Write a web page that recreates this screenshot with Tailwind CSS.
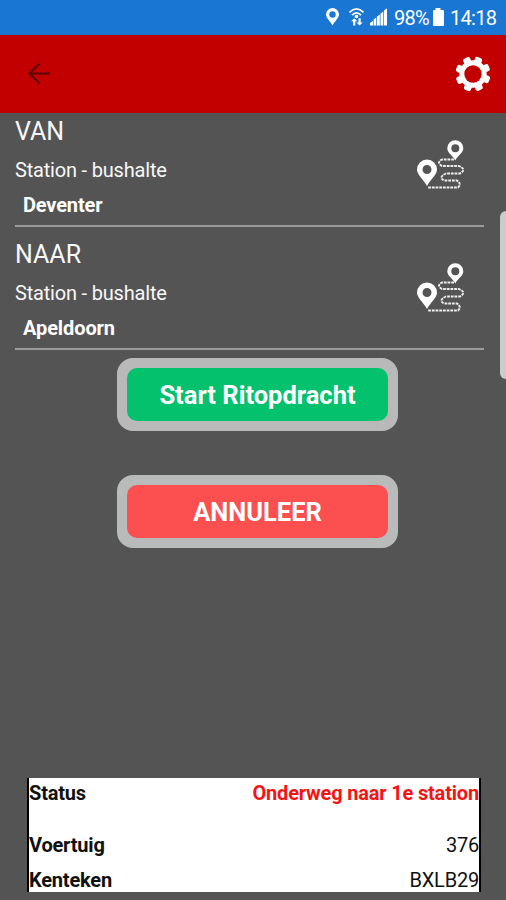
<!DOCTYPE html>
<html lang="nl">
<head>
<meta charset="utf-8">
<title>Ritopdracht</title>
<script src="https://cdn.jsdelivr.net/npm/@tailwindcss/browser@4"></script>
</head>
<body class="relative flex h-[900px] w-[506px] flex-col overflow-hidden bg-[#545454] font-['Roboto',sans-serif] text-[#f8f8f8]">
<svg class="hidden">
  <symbol id="route" viewBox="0 0 54 54">
    <path fill="#fff" fill-rule="evenodd" d="M15 50C12 44 5 39 5 33.500a10 10 0 0 1 20 0C25 39 18 44 15 50zM15 29a4.500 4.500 0 1 0 0 9a4.500 4.500 0 1 0 0-9z"/>
    <path fill="#fff" fill-rule="evenodd" d="M43.300 24.500C41 19.500 35.300 17 35.300 12.200a8 8 0 0 1 16 0C51.300 17 45.500 19.500 43.300 24.500zM43.300 8.200a4 4 0 1 0 0 8a4 4 0 1 0 0-8z"/>
    <path fill="none" stroke="#eee" stroke-width="1.900" stroke-dasharray="2.800 0.900" d="M42 23.500H30Q24 26.500 30 30H47Q55 33.500 48 37.500H34Q26 41 32 44.500H45Q50 48 46 51.500H16"/>
  </symbol>
</svg>
<header class="flex h-[35px] shrink-0 items-center bg-[#1976d2] pl-[326px]">
  <svg class="h-[35px] w-[64px]" viewBox="0 0 64 35" fill="#fff">
    <path fill-rule="evenodd" d="M6.500 25.500C5 22 0 18 0 14.500a6.500 6.500 0 0 1 13 0C13 18 8 22 6.500 25.500zM6.500 11.300a3.200 3.200 0 1 0 0 6.400a3.200 3.200 0 1 0 0-6.400z"/>
    <g fill="none" stroke="#fff" stroke-width="1.800"><path d="M23.500 12.300Q30.500 5.500 37.500 12.300M26 15.200Q30.500 10.500 35 15.200"/></g>
    <circle cx="30.500" cy="16.500" r="1.800"/>
    <path d="M28.300 18.300l3 3h-2v4.200h-2.200v-4.200h-2zM33.500 25.500l-3-3h2v-4.200h2.200v4.200h2z"/>
    <path d="M44 25.500v-2.500l3-2v4.500zM47.600 25.500v-6l2.700-2v8zM51 25.500v-9l2.800-2v11zM54.500 25.500v-12l2.800-2v14zM58 25.500v-15l3-2.300v17.300z"/>
  </svg>
  <span class="ml-[4px] w-[36px] pt-[1px] text-[20px] leading-[34px] tracking-[-0.800px] whitespace-nowrap text-white">98%</span>
  <svg class="ml-[2px] h-[35px] w-[14px]" viewBox="0 0 14 35"><path fill="#fff" d="M3.500 8h5v2H11a1 1 0 0 1 1 1v14a1 1 0 0 1-1 1H2a1 1 0 0 1-1-1V11a1 1 0 0 1 1-1h1.500z"/></svg>
  <span class="ml-[4px] pt-[1px] text-[20px] leading-[34px] tracking-[-0.700px] text-white">14:18</span>
</header>
<nav class="flex h-[78px] shrink-0 items-center justify-between bg-[#c20000] pr-[14px] pl-[26px]">
  <svg class="h-[26px] w-[26px]" viewBox="0 0 26 26" fill="none" stroke="#5a0000" stroke-width="2"><path d="M24 12.500H3.500M13.500 2.500l-10 10l10 10"/></svg>
  <svg class="h-[38px] w-[38px]" viewBox="-19 -19 38 38">
    <g fill="#fff"><rect x="-3.700" y="-17.500" width="7.400" height="35" rx="2" transform="rotate(21)"/><rect x="-3.700" y="-17.500" width="7.400" height="35" rx="2" transform="rotate(66)"/><rect x="-3.700" y="-17.500" width="7.400" height="35" rx="2" transform="rotate(111)"/><rect x="-3.700" y="-17.500" width="7.400" height="35" rx="2" transform="rotate(156)"/><circle r="13.700"/></g>
    <circle r="8.700" fill="#c20000"/>
  </svg>
</nav>
<main class="flex flex-1 flex-col">
  <section class="ml-[15px] flex h-[114px] w-[469px] justify-between border-b-2 border-[#9a9a9a]">
    <div>
      <h2 class="h-[38px] text-[25px] leading-[38px]">VAN</h2>
      <p class="h-[38px] text-[20px] leading-[38px] tracking-[-0.190px]">Station - bushalte</p>
      <p class="pl-[8px] text-[20px] leading-[33px] font-bold tracking-[-0.150px] text-white">Deventer</p>
    </div>
    <svg class="mt-[23px] mr-[18px] h-[54px] w-[54px]"><use href="#route" width="54" height="54"/></svg>
  </section>
  <section class="mt-[9px] ml-[15px] flex h-[114px] w-[469px] justify-between border-b-2 border-[#9a9a9a]">
    <div>
      <h2 class="h-[38px] text-[25px] leading-[38px]">NAAR</h2>
      <p class="h-[38px] text-[20px] leading-[38px] tracking-[-0.190px]">Station - bushalte</p>
      <p class="pl-[8px] text-[20px] leading-[33px] font-bold tracking-[-0.100px] text-white">Apeldoorn</p>
    </div>
    <svg class="mt-[23px] mr-[18px] h-[54px] w-[54px]"><use href="#route" width="54" height="54"/></svg>
  </section>
  <div class="mt-[8px] ml-[117px] flex w-[281px] flex-col gap-[44px]">
    <button class="h-[73px] rounded-[16px] border-[10px] border-[#b9b9b9] bg-[#b9b9b9]"><span class="flex h-full items-center justify-center rounded-[10px] bg-[#03c16d] pt-[2px] text-[25.500px] font-bold text-white"><span>Start Ritopdracht</span></span></button>
    <button class="h-[73px] rounded-[16px] border-[10px] border-[#b9bbba] bg-[#b9bbba]"><span class="flex h-full items-center justify-center rounded-[10px] bg-[#fc4f50] pt-[2px] text-[25.500px] font-bold text-white"><span>ANNULEER</span></span></button>
  </div>
  <dl class="mt-auto mb-[8px] ml-[27px] flex h-[114px] w-[454px] flex-col border-x-2 border-black bg-white text-[20px] text-[#111]">
    <div class="flex h-[52px] justify-between leading-[31px] font-bold tracking-[-0.180px]"><dt>Status</dt><dd class="text-[#f51414]">Onderweg naar 1e station</dd></div>
    <div class="flex h-[35px] justify-between leading-[31px] tracking-[-0.200px]"><dt class="font-bold">Voertuig</dt><dd>376</dd></div>
    <div class="flex h-[27px] justify-between leading-[31px] tracking-[-0.200px]"><dt class="font-bold">Kenteken</dt><dd>BXLB29</dd></div>
  </dl>
</main>
<div class="absolute top-[211px] left-[500px] h-[168px] w-[12px] rounded-[6px] bg-[#cbcbcb]"></div>
</body>
</html>
